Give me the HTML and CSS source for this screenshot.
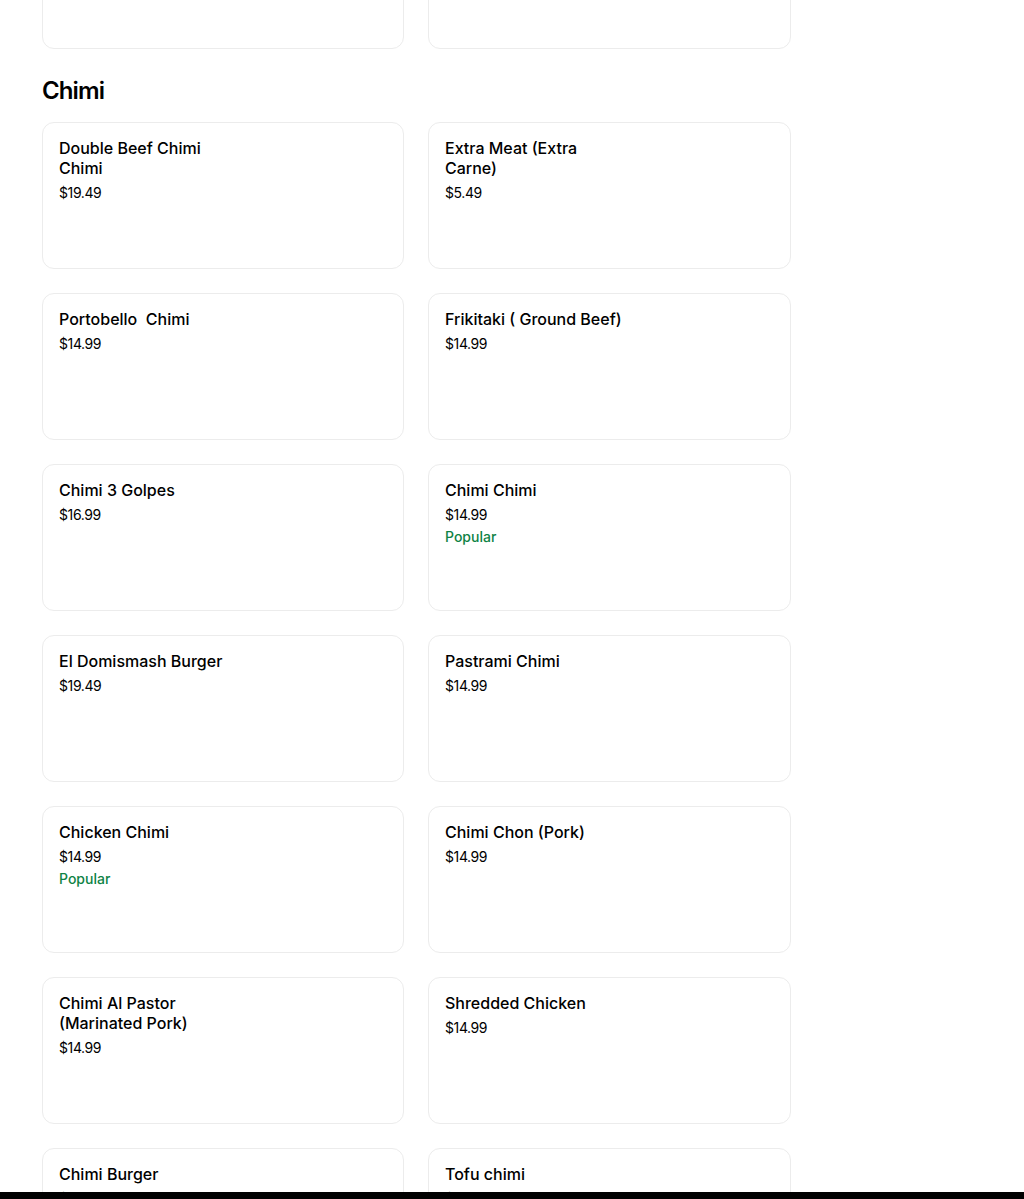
FILE: index.html
```html
<!DOCTYPE html>
<html>
<head>
<meta charset="utf-8">
<link rel="stylesheet" href="styles.css">
</head>
<body>
<div class="page">
  <div class="grid prev">
    <div class="card"></div>
    <div class="card"></div>
  </div>
  <h2 class="section-title">Chimi</h2>
  <div class="grid">
    <div class="card"><div class="title">Double Beef Chimi Chimi</div><div class="price">$19.49</div></div>
    <div class="card"><div class="title">Extra Meat (Extra Carne)</div><div class="price">$5.49</div></div>
    <div class="card"><div class="title">Portobello&nbsp; Chimi</div><div class="price">$14.99</div></div>
    <div class="card"><div class="title">Frikitaki ( Ground Beef)</div><div class="price">$14.99</div></div>
    <div class="card"><div class="title">Chimi 3 Golpes</div><div class="price">$16.99</div></div>
    <div class="card"><div class="title">Chimi Chimi</div><div class="price">$14.99</div><div class="popular">Popular</div></div>
    <div class="card"><div class="title">El Domismash Burger</div><div class="price">$19.49</div></div>
    <div class="card"><div class="title">Pastrami Chimi</div><div class="price">$14.99</div></div>
    <div class="card"><div class="title">Chicken Chimi</div><div class="price">$14.99</div><div class="popular">Popular</div></div>
    <div class="card"><div class="title">Chimi Chon (Pork)</div><div class="price">$14.99</div></div>
    <div class="card"><div class="title">Chimi Al Pastor (Marinated Pork)</div><div class="price">$14.99</div></div>
    <div class="card"><div class="title">Shredded Chicken</div><div class="price">$14.99</div></div>
    <div class="card"><div class="title">Chimi Burger</div><div class="price">$14.99</div></div>
    <div class="card"><div class="title">Tofu chimi</div><div class="price">$14.99</div></div>
  </div>
</div>
<div class="bottom-bar"></div>
</body>
</html>
```
FILE: styles.css
```css
html, body {
  margin: 0;
  padding: 0;
  background: #ffffff;
  overflow: hidden;
}
body {
  font-family: Inter, "Noto Sans", sans-serif;
  color: #000000;
  height: 1199px;
}
.page {
  width: 749px;
  padding-left: 42px;
}
.grid {
  display: grid;
  grid-template-columns: 362px 1fr;
  column-gap: 24px;
  row-gap: 24px;
}
.grid.prev {
  margin-top: -98px;
}
.card {
  box-sizing: border-box;
  height: 147px;
  border: 1px solid #ececec;
  border-radius: 12px;
  padding: 15px 16px;
  display: flex;
  flex-direction: column;
  align-items: flex-start;
}
.section-title {
  margin: 26px 0 15px 0;
  font-size: 24px;
  line-height: 32px;
  font-weight: 600;
  letter-spacing: -0.9px;
}
.title {
  font-size: 16px;
  line-height: 20px;
  font-weight: 500;
  max-width: 184px;
  color: #000;
}
.price {
  margin-top: 6px;
  font-size: 14px;
  line-height: 18px;
  font-weight: 400;
  letter-spacing: -0.4px;
  color: #000;
}
.popular {
  margin-top: 4px;
  font-size: 14px;
  line-height: 18px;
  font-weight: 500;
  color: #0e8345;
}
.bottom-bar {
  position: fixed;
  left: 0;
  right: 0;
  bottom: 0;
  height: 7px;
  background: #000;
}
```
